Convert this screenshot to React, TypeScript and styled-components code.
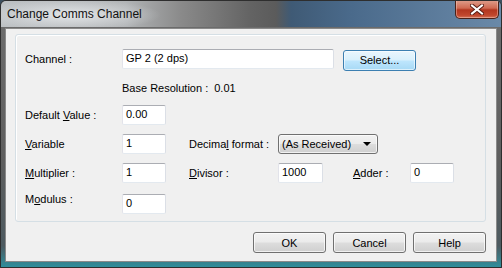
import React from 'react';
import styled, { createGlobalStyle } from 'styled-components';

const GlobalStyle = createGlobalStyle`
  html, body {
    margin: 0;
    padding: 0;
    background: #3d4f5e;
  }
  body {
    font-family: Tahoma, "Liberation Sans", Arial, sans-serif;
    font-size: 11px;
    color: #000;
  }
`;

const Window = styled.div`
  width: 502px;
  height: 268px;
  box-sizing: border-box;
  display: flex;
  flex-direction: column;
  border-radius: 6px 6px 0 0;
  overflow: hidden;
  background: linear-gradient(to bottom, #6e6e6e 0%, #5e5e5e 60%, #4d5a60 92%, #2f8e9c 100%);
  border: 1px solid #2e2e2e;
`;

const TitleBar = styled.div`
  height: 26px;
  flex: none;
  display: flex;
  align-items: flex-start;
  background:
    radial-gradient(ellipse 90px 16px at 70px 14px, rgba(235, 238, 240, 0.85), rgba(235, 238, 240, 0) 100%),
    linear-gradient(to right, #bdc1c4 0%, #b1b4b6 25%, #8a8a8a 36%, #636363 50%, #5b5b5b 55%, #3f5a75 58%, #4a6a8b 70%, #6a89a8 100%);
`;

const Title = styled.div`
  font-family: "Segoe UI", "Liberation Sans", Arial, sans-serif;
  font-size: 12px;
  color: #111;
  padding: 6px 0 0 6px;
`;

const CloseButton = styled.div`
  margin-left: auto;
  margin-right: 2px;
  margin-top: -1px;
  width: 44px;
  height: 19px;
  box-sizing: border-box;
  border: 1px solid #4a2118;
  border-top: none;
  border-radius: 0 0 5px 5px;
  background: linear-gradient(to bottom, #e0a08e 0%, #d06a52 45%, #b3361f 55%, #c1472d 85%, #d47458 100%);
  box-shadow: inset 0 0 0 1px rgba(255, 220, 210, 0.4);
  display: flex;
  align-items: center;
  justify-content: center;
`;

const Client = styled.div`
  flex: 1;
  margin: 1px 4px 5px 4px;
  background: #f0f0f0;
  border: 1px solid #8a8a8a;
  padding: 5px 10px 0 9px;
  display: flex;
  flex-direction: column;
`;

const GroupBox = styled.div`
  height: 188px;
  box-sizing: border-box;
  border: 1px solid #d5dfe5;
  border-radius: 3px;
  box-shadow: inset 1px 1px 0 #fff;
  padding: 14px 0 0 9px;
  display: flex;
  flex-direction: column;
`;

const Row = styled.div<{ $top: number; $alignTop?: boolean }>`
  display: flex;
  align-items: ${(p) => (p.$alignTop ? 'flex-start' : 'center')};
  margin-top: ${(p) => p.$top}px;
  height: 20px;
`;

const Label = styled.div<{ $w: number }>`
  width: ${(p) => p.$w}px;
  flex: none;
  white-space: nowrap;
`;

const Text = styled.span<{ $gap?: number }>`
  margin-right: ${(p) => p.$gap ?? 0}px;
`;

const Input = styled.div<{ $w: number; $after?: number }>`
  width: ${(p) => p.$w}px;
  height: 20px;
  flex: none;
  box-sizing: border-box;
  margin-right: ${(p) => p.$after ?? 0}px;
  background: #fff;
  border: 1px solid;
  border-color: #abadb3 #dbdfe6 #e3e9ef #e2e3ea;
  border-radius: 2px;
  padding: 2px 0 0 3px;
  white-space: nowrap;
`;

const Button = styled.div<{ $w: number; $primary?: boolean }>`
  width: ${(p) => p.$w}px;
  height: 21px;
  flex: none;
  box-sizing: border-box;
  border: 1px solid ${(p) => (p.$primary ? '#3c7fb1' : '#707070')};
  border-radius: 3px;
  background: ${(p) =>
    p.$primary
      ? 'linear-gradient(to bottom, #eaf6fd 0%, #d9f0fc 48%, #bee6fd 52%, #a7d9f5 100%)'
      : 'linear-gradient(to bottom, #f2f2f2 0%, #ebebeb 48%, #dddddd 52%, #cfcfcf 100%)'};
  box-shadow: inset 0 0 0 1px ${(p) => (p.$primary ? 'rgba(255,255,255,0.6)' : 'rgba(255,255,255,0.7)')};
  display: flex;
  align-items: center;
  justify-content: center;
`;

const Dropdown = styled.div`
  width: 100px;
  height: 20px;
  flex: none;
  box-sizing: border-box;
  border: 1px solid #707070;
  border-radius: 3px;
  background: linear-gradient(to bottom, #f2f2f2 0%, #ebebeb 48%, #dddddd 52%, #cfcfcf 100%);
  box-shadow: inset 0 0 0 1px rgba(255, 255, 255, 0.7);
  display: flex;
  align-items: center;
  padding: 0 0 0 3px;
`;

const Arrow = styled.div`
  margin-left: auto;
  margin-right: 6px;
  width: 0;
  height: 0;
  border-left: 4px solid transparent;
  border-right: 4px solid transparent;
  border-top: 4px solid #000;
`;

const ButtonRow = styled.div`
  display: flex;
  justify-content: flex-end;
  gap: 7px;
  margin-top: 10px;
`;

export default function App() {
  return (
    <>
      <GlobalStyle />
      <Window>
        <TitleBar>
          <Title>Change Comms Channel</Title>
          <CloseButton>
            <svg width="14" height="11" viewBox="0 0 14 11">
              <path d="M2 1.5 L12 9.5 M12 1.5 L2 9.5" stroke="#5a1e14" strokeWidth="4" strokeLinecap="square" />
              <path d="M2 1.5 L12 9.5 M12 1.5 L2 9.5" stroke="#fff" strokeWidth="2" strokeLinecap="square" />
            </svg>
          </CloseButton>
        </TitleBar>
        <Client>
          <GroupBox>
            <Row $top={0}>
              <Label $w={97}>Channel :</Label>
              <Input $w={212} $after={9}>GP 2 (2 dps)</Input>
              <Button $w={73} $primary style={{ marginTop: 2 }}>Select...</Button>
            </Row>
            <Row $top={9}>
              <Label $w={97} />
              <Text $gap={6}>Base Resolution :</Text>
              <Text>0.01</Text>
            </Row>
            <Row $top={7}>
              <Label $w={97}>Default <u>V</u>alue :</Label>
              <Input $w={44}>0.00</Input>
            </Row>
            <Row $top={9}>
              <Label $w={97}><u>V</u>ariable</Label>
              <Input $w={44} $after={23}>1</Input>
              <Label $w={89}>Decima<u>l</u> format :</Label>
              <Dropdown>
                (As Received)
                <Arrow />
              </Dropdown>
            </Row>
            <Row $top={9}>
              <Label $w={97}><u>M</u>ultiplier :</Label>
              <Input $w={44} $after={23}>1</Input>
              <Label $w={89}><u>D</u>ivisor :</Label>
              <Input $w={45} $after={30}>1000</Input>
              <Label $w={57}><u>A</u>dder :</Label>
              <Input $w={44}>0</Input>
            </Row>
            <Row $top={11} $alignTop>
              <Label $w={97} style={{ marginTop: -1 }}>M<u>o</u>dulus :</Label>
              <Input $w={44}>0</Input>
            </Row>
          </GroupBox>
          <ButtonRow>
            <Button $w={73}>OK</Button>
            <Button $w={73}>Cancel</Button>
            <Button $w={73}>Help</Button>
          </ButtonRow>
        </Client>
      </Window>
    </>
  );
}
